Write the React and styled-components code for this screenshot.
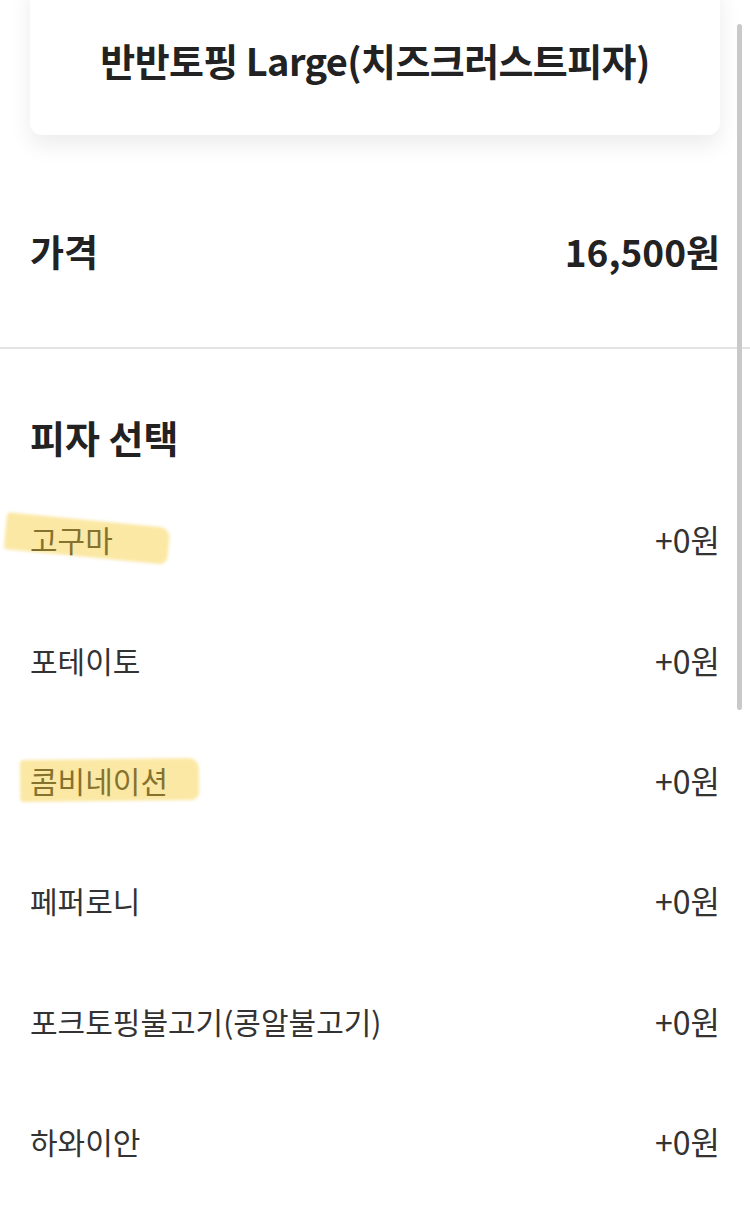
import React from 'react';
import styled, { createGlobalStyle, css } from 'styled-components';

const GlobalStyle = createGlobalStyle`
  html, body {
    margin: 0;
    padding: 0;
    background: #fff;
  }
  body {
    font-family: "Noto Sans CJK KR", "Noto Sans", sans-serif;
    color: #222;
    overflow: hidden;
  }
`;

const Page = styled.div`
  width: 750px;
  min-height: 1206px;
  background: #fff;
`;

const Section = styled.div`
  padding: 0 30px;
`;

const TitleCard = styled.div`
  margin-top: -20px;
  height: 155px;
  background: #fff;
  border-radius: 12px;
  box-shadow: 0 10px 22px rgba(0, 0, 0, 0.08);
  display: flex;
  align-items: center;
  justify-content: center;
`;

const Title = styled.h1`
  margin: 0;
  padding-top: 4px;
  font-size: 38px;
  font-weight: 700;
  letter-spacing: -0.6px;
  color: #222;
`;

const PriceRow = styled.div`
  height: 192px;
  padding-top: 20px;
  display: flex;
  align-items: center;
  justify-content: space-between;
  font-size: 37px;
  font-weight: 700;
  color: #222;
`;

const Divider = styled.hr`
  margin: 0;
  border: 0;
  height: 2px;
  background: #e4e4e4;
`;

const Heading = styled.h2`
  margin: 63px 0 17px;
  font-size: 38px;
  line-height: 50px;
  font-weight: 700;
  color: #222;
`;

const OptionRow = styled.div`
  height: 120.4px;
  display: flex;
  align-items: center;
  justify-content: space-between;
  font-size: 30px;
  color: #333;
`;

const highlights = {
  tilted: css`
    left: -25px;
    right: -56px;
    top: 3px;
    bottom: 4px;
    transform: rotate(5.5deg);
  `,
  flat: css`
    left: -10px;
    right: -31px;
    top: 1px;
    bottom: 1px;
    transform: rotate(-0.7deg);
  `,
};

const OptionName = styled.span`
  position: relative;

  ${({ $mark }) =>
    $mark &&
    css`
      &::after {
        content: '';
        position: absolute;
        background: rgba(245, 200, 40, 0.42);
        border-radius: 4px 10px 8px 3px;
        filter: blur(1.5px);
        ${highlights[$mark]}
      }
    `}
`;

const OptionPrice = styled.span`
  font-size: 32px;
  color: #333;
`;

const Scrollbar = styled.div`
  position: fixed;
  top: 24px;
  right: 8px;
  width: 5px;
  height: 686px;
  border-radius: 3px;
  background: #c9c9c9;
`;

const options = [
  { name: '고구마', price: '+0원', mark: 'tilted' },
  { name: '포테이토', price: '+0원' },
  { name: '콤비네이션', price: '+0원', mark: 'flat' },
  { name: '페퍼로니', price: '+0원' },
  { name: '포크토핑불고기(콩알불고기)', price: '+0원' },
  { name: '하와이안', price: '+0원' },
];

export default function App() {
  return (
    <Page>
      <GlobalStyle />
      <Section>
        <TitleCard>
          <Title>반반토핑 Large(치즈크러스트피자)</Title>
        </TitleCard>
        <PriceRow>
          <span>가격</span>
          <span>16,500원</span>
        </PriceRow>
      </Section>
      <Divider />
      <Section>
        <Heading>피자 선택</Heading>
        {options.map((opt) => (
          <OptionRow key={opt.name}>
            <OptionName $mark={opt.mark}>{opt.name}</OptionName>
            <OptionPrice>{opt.price}</OptionPrice>
          </OptionRow>
        ))}
      </Section>
      <Scrollbar />
    </Page>
  );
}
